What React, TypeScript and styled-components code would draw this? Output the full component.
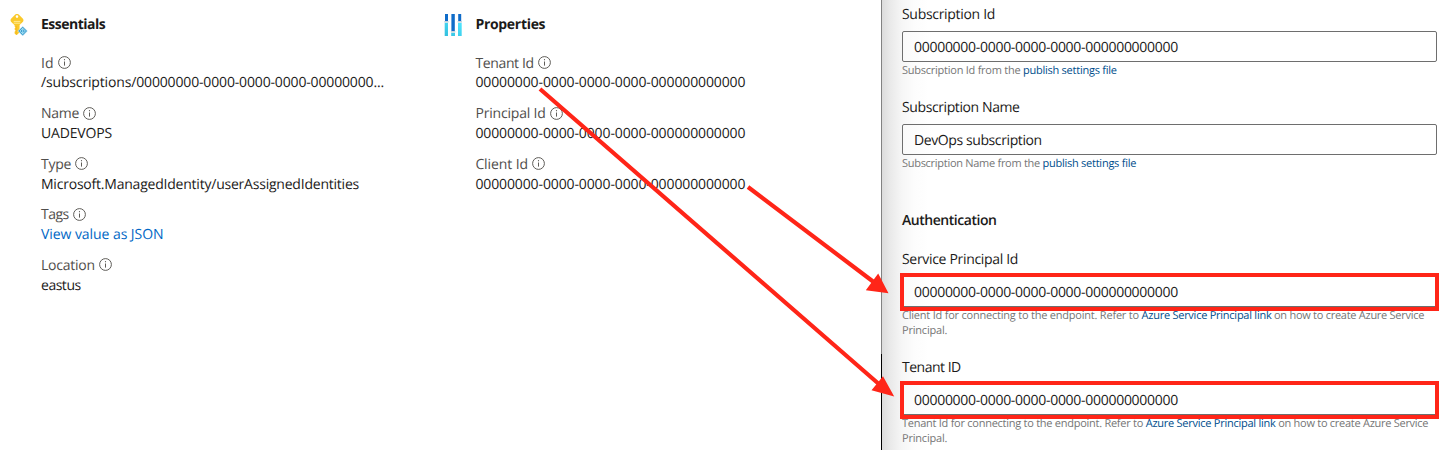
import React from 'react';
import styled, { createGlobalStyle } from 'styled-components';

const GlobalStyle = createGlobalStyle`
  *, *::before, *::after { box-sizing: border-box; }
  body {
    margin: 0;
    background: #fff;
    color: #1b1a19;
    font-family: 'Open Sans', 'Noto Sans', sans-serif;
    font-size: 14px;
    text-rendering: geometricPrecision;
  }
`;

const Page = styled.main`
  position: relative;
  display: flex;
  width: 1445px;
  height: 450px;
  overflow: hidden;
`;

const Overview = styled.section`
  display: flex;
  width: 881px;
  padding: 14px 0 0 8px;
`;

const Group = styled.section<{ $width: number }>`
  display: flex;
  width: ${p => p.$width}px;
`;

const GroupIcon = styled.div`
  flex: none;
  width: 33px;
  height: 24px;
`;

const GroupBody = styled.div`
  min-width: 0;
`;

const Tracked = styled.span<{ $track: number }>`
  letter-spacing: ${p => p.$track}px;
`;

const GroupTitle = styled.h2`
  margin: 1px 0 18.5px;
  font-size: 14px;
  line-height: 20px;
  font-weight: 700;
`;

const EntryValue = styled.div<{ $link?: boolean }>`
  line-height: 20px;
  color: ${p => (p.$link ? '#0067c5' : '#1b1a19')};
  white-space: nowrap;
`;

const Entry = styled.div`
  height: 50.6px;

  &:first-of-type ${EntryValue} {
    margin-top: -1px;
  }
`;

const EntryLabel = styled.div`
  display: flex;
  align-items: center;
  gap: 4.4px;
  height: 20px;
  line-height: 20px;
  color: #504e4c;
  white-space: nowrap;

  svg {
    margin-bottom: 2px;
  }
`;

const FormPanel = styled.section`
  flex: 1;
  padding: 5px 8px 0 20px;
  border-left: 1px solid;
  border-image: linear-gradient(#828282 353px, #000 353px) 1;
  background: linear-gradient(90deg, #dcdcdc 0, #e9e9e9 8px, #f6f6f6 20px, #fcfcfc 32px, #fff 46px);
`;

const Field = styled.div`
  margin-bottom: 20px;
`;

const FieldLabel = styled.label`
  display: block;
  height: 20px;
  margin-bottom: 6px;
  line-height: 20px;
`;

const InputFrame = styled.div`
  position: relative;
`;

const Input = styled.div`
  height: 31px;
  padding: 1px 11px 0;
  border: 1px solid #6e6e6e;
  border-radius: 2px;
  background: linear-gradient(90deg, #fafafa, #fff 30px);
  line-height: 30px;
`;

const Highlight = styled.div`
  position: absolute;
  inset: -3px -2px -4px -2px;
  border: 4px solid #ff2518;
`;

const Help = styled.p`
  margin: 1px 0 0;
  width: 530px;
  font-size: 11px;
  line-height: 15px;
  color: #767676;
`;

const HelpLink = styled.a`
  color: #004e8c;
  letter-spacing: -0.25px;
`;

const SectionTitle = styled.h3`
  margin: 40px 0 19px;
  font-size: 14px;
  font-weight: 600;
  line-height: 20px;
  letter-spacing: -0.46px;
`;

const Arrows = styled.svg`
  position: absolute;
  inset: 0;
  pointer-events: none;
`;

const InfoIcon = () => (
  <svg width="13" height="13" viewBox="0 0 13 13" fill="none" stroke="#55534f">
    <circle cx="6.5" cy="6.5" r="5.9" strokeWidth="0.95" />
    <path d="M6.5 5.5V9.6" strokeWidth="0.95" />
    <circle cx="6.5" cy="3.7" r="0.6" fill="#55534f" stroke="none" />
  </svg>
);

const KeyIcon = () => (
  <svg width="22" height="24" viewBox="0 0 22 24">
    <path
      fill="#fac92b"
      fillRule="evenodd"
      d="M8.9 0C10.1 0 10.8.5 11.5 1.2L14.7 4.4C15.7 5.4 15.7 7 14.7 8L11.6 11.1V18.3L9.1 20.8C8.7 21.2 8.3 21.2 7.9 20.8L6.6 19.5V17.8L7.8 16.7L6.6 15.5V14.4L7.5 13.5L6.6 12.6V11.2L3.3 8C2.3 7 2.3 5.4 3.3 4.4L6.5 1.2C7.2.5 7.8 0 8.9 0ZM9 1.3A1.3 1.3 0 1 0 9 3.9A1.3 1.3 0 1 0 9 1.3Z"
    />
    <path d="M5.7 7.4H12.4M5.7 9.2H12.4" stroke="#fff2b0" strokeWidth="0.8" />
    <path d="M8.2 12V20" stroke="#f5b51e" strokeWidth="0.9" />
    <path d="M14.7 12.2L19.5 17L14.7 21.9L9.8 17Z" fill="#3c9fd0" stroke="#fff" strokeWidth="0.5" />
    <path d="M14.7 13.8V20.2M14.4 14.4L11.9 17.2L14.6 19.5L17.4 17.2L14.9 14.4" fill="none" stroke="#b9ebfa" strokeWidth="0.8" />
  </svg>
);

const SlidersIcon = () => (
  <svg width="22" height="24" viewBox="0 0 22 24">
    <defs>
      <linearGradient id="rail" x1="0" y1="1" x2="1" y2="0">
        <stop offset="0" stopColor="#32bedd" />
        <stop offset="1" stopColor="#50e6ff" />
      </linearGradient>
    </defs>
    <path fill="#0f6cc9" d="M3 0H6V7H3ZM9.4 0H12.8V17H9.4ZM16.2 0H19.2V7H16.2Z" />
    <path fill="url(#rail)" d="M2.7 8.8H6V22H2.7ZM9.2 18.8H13V22H9.2ZM16 8.8H19.7V22H16Z" />
    <path fill="#c5d3dc" d="M2.2 7H6.5V8.4H2.2ZM8.9 17H13.3V18.4H8.9ZM15.6 7H20V8.4H15.6Z" />
  </svg>
);

type Item = { label: string; labelTrack: number; value: string; track: number; link?: boolean };

const guid = '00000000-0000-0000-0000-000000000000';

const essentials: Item[] = [
  { label: 'Id', labelTrack: 0, value: '/subscriptions/00000000-0000-0000-0000-00000000...', track: -0.154 },
  { label: 'Name', labelTrack: -0.28, value: 'UADEVOPS', track: -0.18 },
  { label: 'Type', labelTrack: -0.28, value: 'Microsoft.ManagedIdentity/userAssignedIdentities', track: -0.218 },
  { label: 'Tags', labelTrack: -0.5, value: 'View value as JSON', track: -0.06, link: true },
  { label: 'Location', labelTrack: -0.23, value: 'eastus', track: -0.48 },
];

const properties: Item[] = [
  { label: 'Tenant Id', labelTrack: -0.36, value: guid, track: -0.116 },
  { label: 'Principal Id', labelTrack: -0.18, value: guid, track: -0.116 },
  { label: 'Client Id', labelTrack: -0.1, value: guid, track: -0.116 },
];

const Entries = ({ items }: { items: Item[] }) => (
  <>
    {items.map(item => (
      <Entry key={item.label}>
        <EntryLabel>
          <Tracked $track={item.labelTrack}>{item.label}</Tracked>
          <InfoIcon />
        </EntryLabel>
        <EntryValue $link={item.link}>
          <Tracked $track={item.track}>{item.value}</Tracked>
        </EntryValue>
      </Entry>
    ))}
  </>
);

type FormFieldProps = {
  label: string;
  labelTrack: number;
  value?: string;
  valueTrack?: number;
  highlighted?: boolean;
  children: React.ReactNode;
};

const FormField = ({ label, labelTrack, value = guid, valueTrack = -0.285, highlighted, children }: FormFieldProps) => (
  <Field>
    <FieldLabel>
      <Tracked $track={labelTrack}>{label}</Tracked>
    </FieldLabel>
    <InputFrame>
      <Input>
        <Tracked $track={valueTrack}>{value}</Tracked>
      </Input>
      {highlighted && <Highlight />}
    </InputFrame>
    <Help>{children}</Help>
  </Field>
);

export default function App() {
  return (
    <Page>
      <GlobalStyle />
      <Overview>
        <Group $width={434.4}>
          <GroupIcon><KeyIcon /></GroupIcon>
          <GroupBody>
            <GroupTitle><Tracked $track={-0.5}>Essentials</Tracked></GroupTitle>
            <Entries items={essentials} />
          </GroupBody>
        </Group>
        <Group $width={438}>
          <GroupIcon><SlidersIcon /></GroupIcon>
          <GroupBody>
            <GroupTitle><Tracked $track={-0.3}>Properties</Tracked></GroupTitle>
            <Entries items={properties} />
          </GroupBody>
        </Group>
      </Overview>
      <FormPanel>
        <FormField label="Subscription Id" labelTrack={-0.31}>
          <Tracked $track={-0.246}>Subscription Id from the </Tracked>
          <HelpLink>publish settings file</HelpLink>
        </FormField>
        <FormField label="Subscription Name" labelTrack={-0.4} value="DevOps subscription" valueTrack={-0.4}>
          <Tracked $track={-0.282}>Subscription Name from the </Tracked>
          <HelpLink>publish settings file</HelpLink>
        </FormField>
        <SectionTitle>Authentication</SectionTitle>
        <FormField label="Service Principal Id" labelTrack={-0.32} highlighted>
          <Tracked $track={-0.215}>Client Id for connecting to the endpoint. Refer to </Tracked>
          <HelpLink>Azure Service Principal link</HelpLink>
          <Tracked $track={-0.27}> on how to create Azure Service </Tracked>
          <Tracked $track={-0.2}>Principal.</Tracked>
        </FormField>
        <FormField label="Tenant ID" labelTrack={-0.5} highlighted>
          <Tracked $track={-0.26}>Tenant Id for connecting to the endpoint. Refer to </Tracked>
          <HelpLink>Azure Service Principal link</HelpLink>
          <Tracked $track={-0.27}> on how to create Azure Service </Tracked>
          <Tracked $track={-0.2}>Principal.</Tracked>
        </FormField>
      </FormPanel>
      <Arrows width="1445" height="450" viewBox="0 0 1445 450" stroke="#ff2518" fill="#ff2518">
        <path d="M540 89L880 385M748 187L875 283" strokeWidth="4.2" />
        <path d="M894.2 396.6L871.5 390.2L883 376.2ZM888.5 293.2L865.8 290.2L878.2 273.6Z" stroke="none" />
      </Arrows>
    </Page>
  );
}
